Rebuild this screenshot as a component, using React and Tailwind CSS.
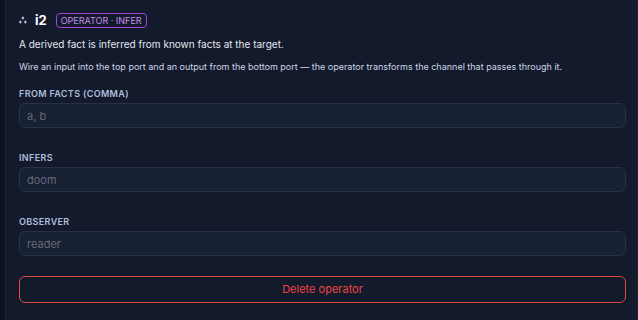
import { useState } from "react";

const fields = [
  { label: "From facts (comma)", placeholder: "a, b" },
  { label: "Infers", placeholder: "doom" },
  { label: "Observer", placeholder: "reader" },
];

function Field({ label, placeholder }) {
  const [value, setValue] = useState("");
  return (
    <div className="flex flex-col gap-[4px]">
      <label className="text-[9px] font-semibold uppercase tracking-[0.04em] leading-[11px] text-[#aebfdc]">
        {label}
      </label>
      <input
        value={value}
        onChange={(e) => setValue(e.target.value)}
        placeholder={placeholder}
        className="h-[25px] w-full rounded-md border border-[#283146] bg-[#182033] px-[7px] text-[11px] text-slate-200 placeholder:text-[#636b7a] outline-none"
      />
    </div>
  );
}

export default function App() {
  return (
    <div
      className="flex h-[320px] w-[638px] bg-[#0c1222]"
      style={{ fontFamily: "Inter, 'Noto Sans', sans-serif" }}
    >
      {/* canvas edge */}
      <div className="w-[5px] shrink-0" />

      <div className="flex flex-1 flex-col border-l border-r border-[#1e2638] bg-[#131a2c] pl-[13px] pr-[11px] pt-[12px]">
        <div className="flex h-[16px] items-center gap-[8px]">
          <span className="text-[12px] font-bold leading-none text-slate-300">∴</span>
          <span className="text-[13px] font-bold leading-none text-white">i2</span>
          <span className="ml-[1px] rounded-[4px] border border-[#a046d8] px-[4px] py-[1px] text-[9px] uppercase leading-[11px] text-[#c88be8]">
            Operator · Infer
          </span>
        </div>

        <p className="mt-[10px] text-[10px] leading-[13px] text-[#e3e8f0]">
          A derived fact is inferred from known facts at the target.
        </p>
        <p className="mt-[10px] text-[9px] leading-[12px] text-[#cdd6e4]">
          Wire an input into the top port and an output from the bottom port — the operator transforms the channel that passes through it.
        </p>

        <div className="mt-[15px] flex flex-col gap-[24px]">
          {fields.map((f) => (
            <Field key={f.label} label={f.label} placeholder={f.placeholder} />
          ))}
        </div>

        <button className="mt-[20px] h-[27px] w-full rounded-md border border-[#e5483f] text-[11px] text-[#ef4444]">
          Delete operator
        </button>
      </div>
    </div>
  );
}
